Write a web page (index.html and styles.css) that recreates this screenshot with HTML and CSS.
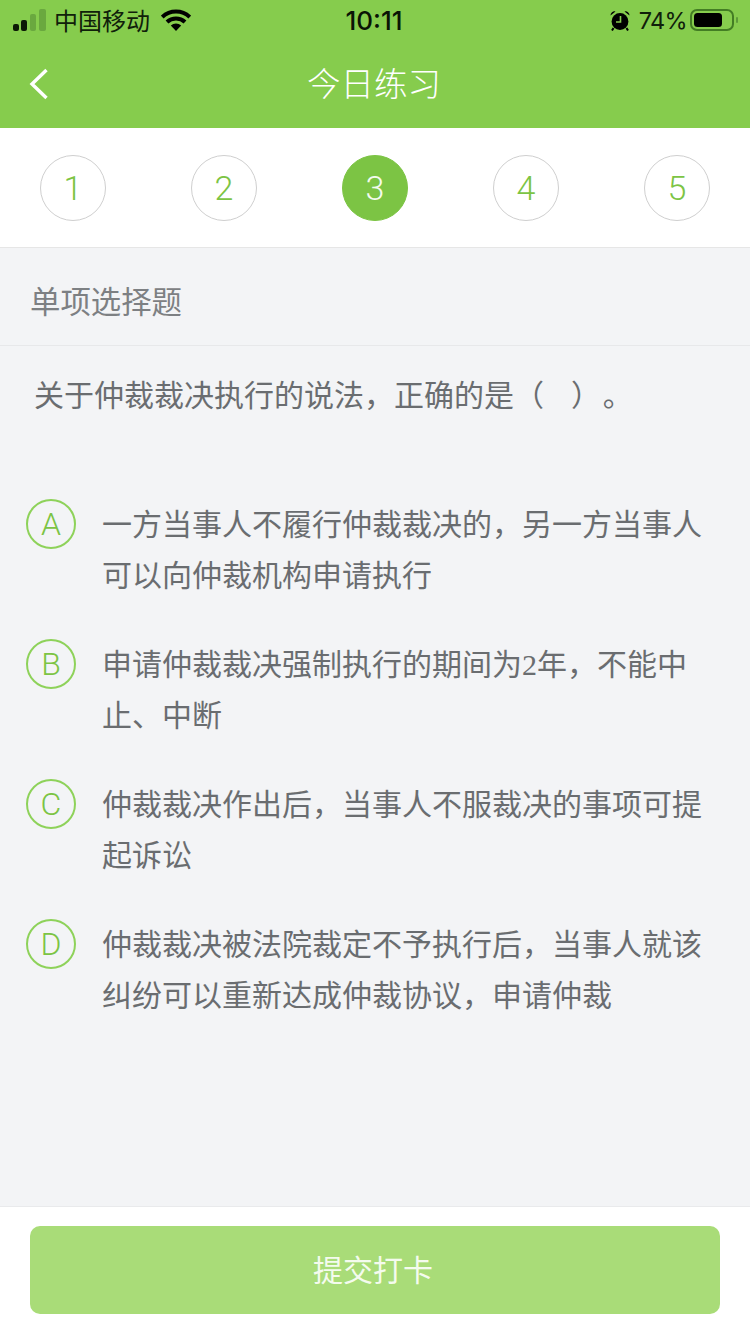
FILE: index.html
```html
<!DOCTYPE html>
<html lang="zh">
<head>
<meta charset="utf-8">
<title>今日练习</title>
<link rel="stylesheet" href="styles.css">
</head>
<body>
<div class="page">
	<div class="top">
		<div class="status">
			<div class="status_left">
				<svg class="signal" width="33" height="22" viewBox="0 0 33 22">
					<rect x="0" y="15" width="6" height="7" rx="2" fill="#0c1a05"/>
					<rect x="8" y="11" width="6" height="11" rx="2" fill="#0c1a05"/>
					<rect x="17" y="5" width="6" height="17" rx="2" fill="#6aa83f"/>
					<rect x="26" y="0" width="7" height="22" rx="2" fill="#6aa83f"/>
				</svg>
				<span class="carrier">中国移动</span>
				<svg class="wifi" width="30" height="22" viewBox="0 0 30 22">
					<path d="M1.2 8a20 20 0 0 1 27.6 0" fill="none" stroke="#000" stroke-width="4"/>
					<path d="M6 13a13 13 0 0 1 18 0" fill="none" stroke="#000" stroke-width="4"/>
					<path d="M9.8 16.6a7.5 7.5 0 0 1 10.4 0L15 22z" fill="#000"/>
				</svg>
			</div>
			<div class="status_time">10:11</div>
			<div class="status_right">
				<svg class="alarm" width="20" height="21" viewBox="0 0 20 21">
					<circle cx="10" cy="11.5" r="8.4" fill="#000"/>
					<path d="M0.5 5.5a4 4 0 0 1 5-4zM19.5 5.5a4 4 0 0 0-5-4z" fill="#000"/>
					<path d="M3.5 18l-1.5 2.5M16.5 18l1.5 2.5" stroke="#000" stroke-width="2"/>
					<path d="M10.5 6v6H6" fill="none" stroke="#86cc4d" stroke-width="1.6"/>
				</svg>
				<span class="percent">74%</span>
				<svg class="battery" width="48" height="22" viewBox="0 0 48 22">
					<rect x="1" y="1" width="42" height="20" rx="6" fill="none" stroke="#437d24" stroke-width="2"/>
					<rect x="4" y="4" width="28" height="14" rx="3.5" fill="#000"/>
					<rect x="46" y="8" width="2" height="6" rx="1" fill="#5d9a38"/>
				</svg>
			</div>
		</div>
		<div class="nav">
			<svg class="back" width="20" height="32" viewBox="0 0 20 32">
				<path d="M17.5 2L3 16l14.5 14" fill="none" stroke="#fff" stroke-width="3.4"/>
			</svg>
			<div class="nav_title">今日练习</div>
		</div>
	</div>

	<div class="steps">
		<div class="step">1</div>
		<div class="step">2</div>
		<div class="step step_on">3</div>
		<div class="step">4</div>
		<div class="step">5</div>
	</div>

	<div class="main">
		<div class="q_type">单项选择题</div>
		<div class="q_text">关于仲裁裁决执行的说法，正确的是（&nbsp;&nbsp;&nbsp;&nbsp;）&#8202;。</div>
		<div class="options">
			<div class="option">
				<div class="letter">A</div>
				<div class="opt_text">一方当事人不履行仲裁裁决的，另一方当事人可以向仲裁机构申请执行</div>
			</div>
			<div class="option">
				<div class="letter">B</div>
				<div class="opt_text">申请仲裁裁决强制执行的期间为2年，不能中止、中断</div>
			</div>
			<div class="option">
				<div class="letter">C</div>
				<div class="opt_text">仲裁裁决作出后，当事人不服裁决的事项可提起诉讼</div>
			</div>
			<div class="option">
				<div class="letter">D</div>
				<div class="opt_text">仲裁裁决被法院裁定不予执行后，当事人就该纠纷可以重新达成仲裁协议，申请仲裁</div>
			</div>
		</div>
	</div>

	<div class="footer">
		<div class="submit">提交打卡</div>
	</div>
</div>
</body>
</html>
```

FILE: styles.css
```css
html, body {
	margin: 0;
	padding: 0;
}
body {
	font-family: "Noto Sans CJK SC", "Liberation Sans", sans-serif;
	background: #f3f4f6;
}
.page {
	width: 750px;
	height: 1334px;
	display: flex;
	flex-direction: column;
	overflow: hidden;
}

/* green top */
.top {
	height: 128px;
	background: #86cc4d;
}
.status {
	height: 40px;
	display: flex;
	align-items: center;
	padding: 0 12px 0 13px;
}
.status_left, .status_right {
	flex: 1;
	display: flex;
	align-items: center;
}
.status_right {
	justify-content: flex-end;
}
.carrier {
	font-size: 24px;
	line-height: 40px;
	color: #10200a;
	margin-left: 8px;
}
.wifi {
	margin-left: 11px;
}
.status_time {
	font-family: "Inter", "Liberation Sans", sans-serif;
	font-size: 26px;
	font-weight: 500;
	color: #0a1405;
	margin-left: -3px;
}
.percent {
	font-family: "Inter", "Liberation Sans", sans-serif;
	font-size: 23.5px;
	letter-spacing: -0.6px;
	color: #10200a;
	margin: 0 3px 0 9px;
}
.nav {
	height: 88px;
	display: flex;
	align-items: center;
	justify-content: center;
	position: relative;
}
.back {
	position: absolute;
	left: 29px;
	top: 28px;
}
.nav_title {
	font-size: 33.5px;
	color: #fff;
	line-height: 88px;
	font-weight: 300;
	margin: -4px 2px 0 0;
}

/* step circles */
.steps {
	height: 120px;
	box-sizing: border-box;
	background: #fff;
	border-bottom: 1px solid #e6e6e6;
	display: flex;
	justify-content: space-between;
	align-items: center;
	padding: 0 40px;
}
.step {
	width: 66px;
	height: 66px;
	box-sizing: border-box;
	border: 1px solid #cfcfcf;
	border-radius: 50%;
	font-family: "Roboto", "Liberation Sans", sans-serif;
	font-weight: 300;
	font-size: 34px;
	line-height: 64px;
	text-align: center;
	color: #7cc444;
}
.step_on {
	background: #7cc444;
	border-color: #7cc444;
	color: #f4fbee;
}

/* question */
.main {
	flex: 1;
	color: #6a6d70;
}
.q_type {
	height: 98px;
	box-sizing: border-box;
	border-bottom: 1px solid #e7e8ea;
	padding-left: 30px;
	font-size: 30.4px;
	line-height: 104px;
	color: #7d8083;
}
.q_text {
	padding-left: 34px;
	font-size: 30px;
	line-height: 50px;
	margin-top: 22px;
	white-space: nowrap;
}
.options {
	margin-top: 81px;
	display: flex;
	flex-direction: column;
	gap: 37px;
}
.option {
	display: flex;
	padding-left: 26px;
	min-height: 103px;
}
.letter {
	width: 50px;
	height: 50px;
	flex: none;
	box-sizing: border-box;
	border: 2px solid #8ed25a;
	border-radius: 50%;
	font-family: "Roboto", "Liberation Sans", sans-serif;
	font-weight: 300;
	font-size: 32px;
	line-height: 47px;
	text-align: center;
	color: #7cc444;
}
.opt_text {
	width: 600px;
	margin-left: 26px;
	font-family: "Liberation Serif", "Noto Sans CJK SC", serif;
	font-size: 30px;
	line-height: 51px;
}

/* submit */
.footer {
	height: 128px;
	box-sizing: border-box;
	background: #fff;
	border-top: 1px solid #e9eaec;
	padding: 19px 30px 0;
}
.submit {
	height: 88px;
	box-sizing: border-box;
	padding: 0 4px 4px 0;
	background: #a9dc78;
	border-radius: 10px;
	font-size: 30px;
	line-height: 84px;
	text-align: center;
	color: #f4fbee;
}
```
